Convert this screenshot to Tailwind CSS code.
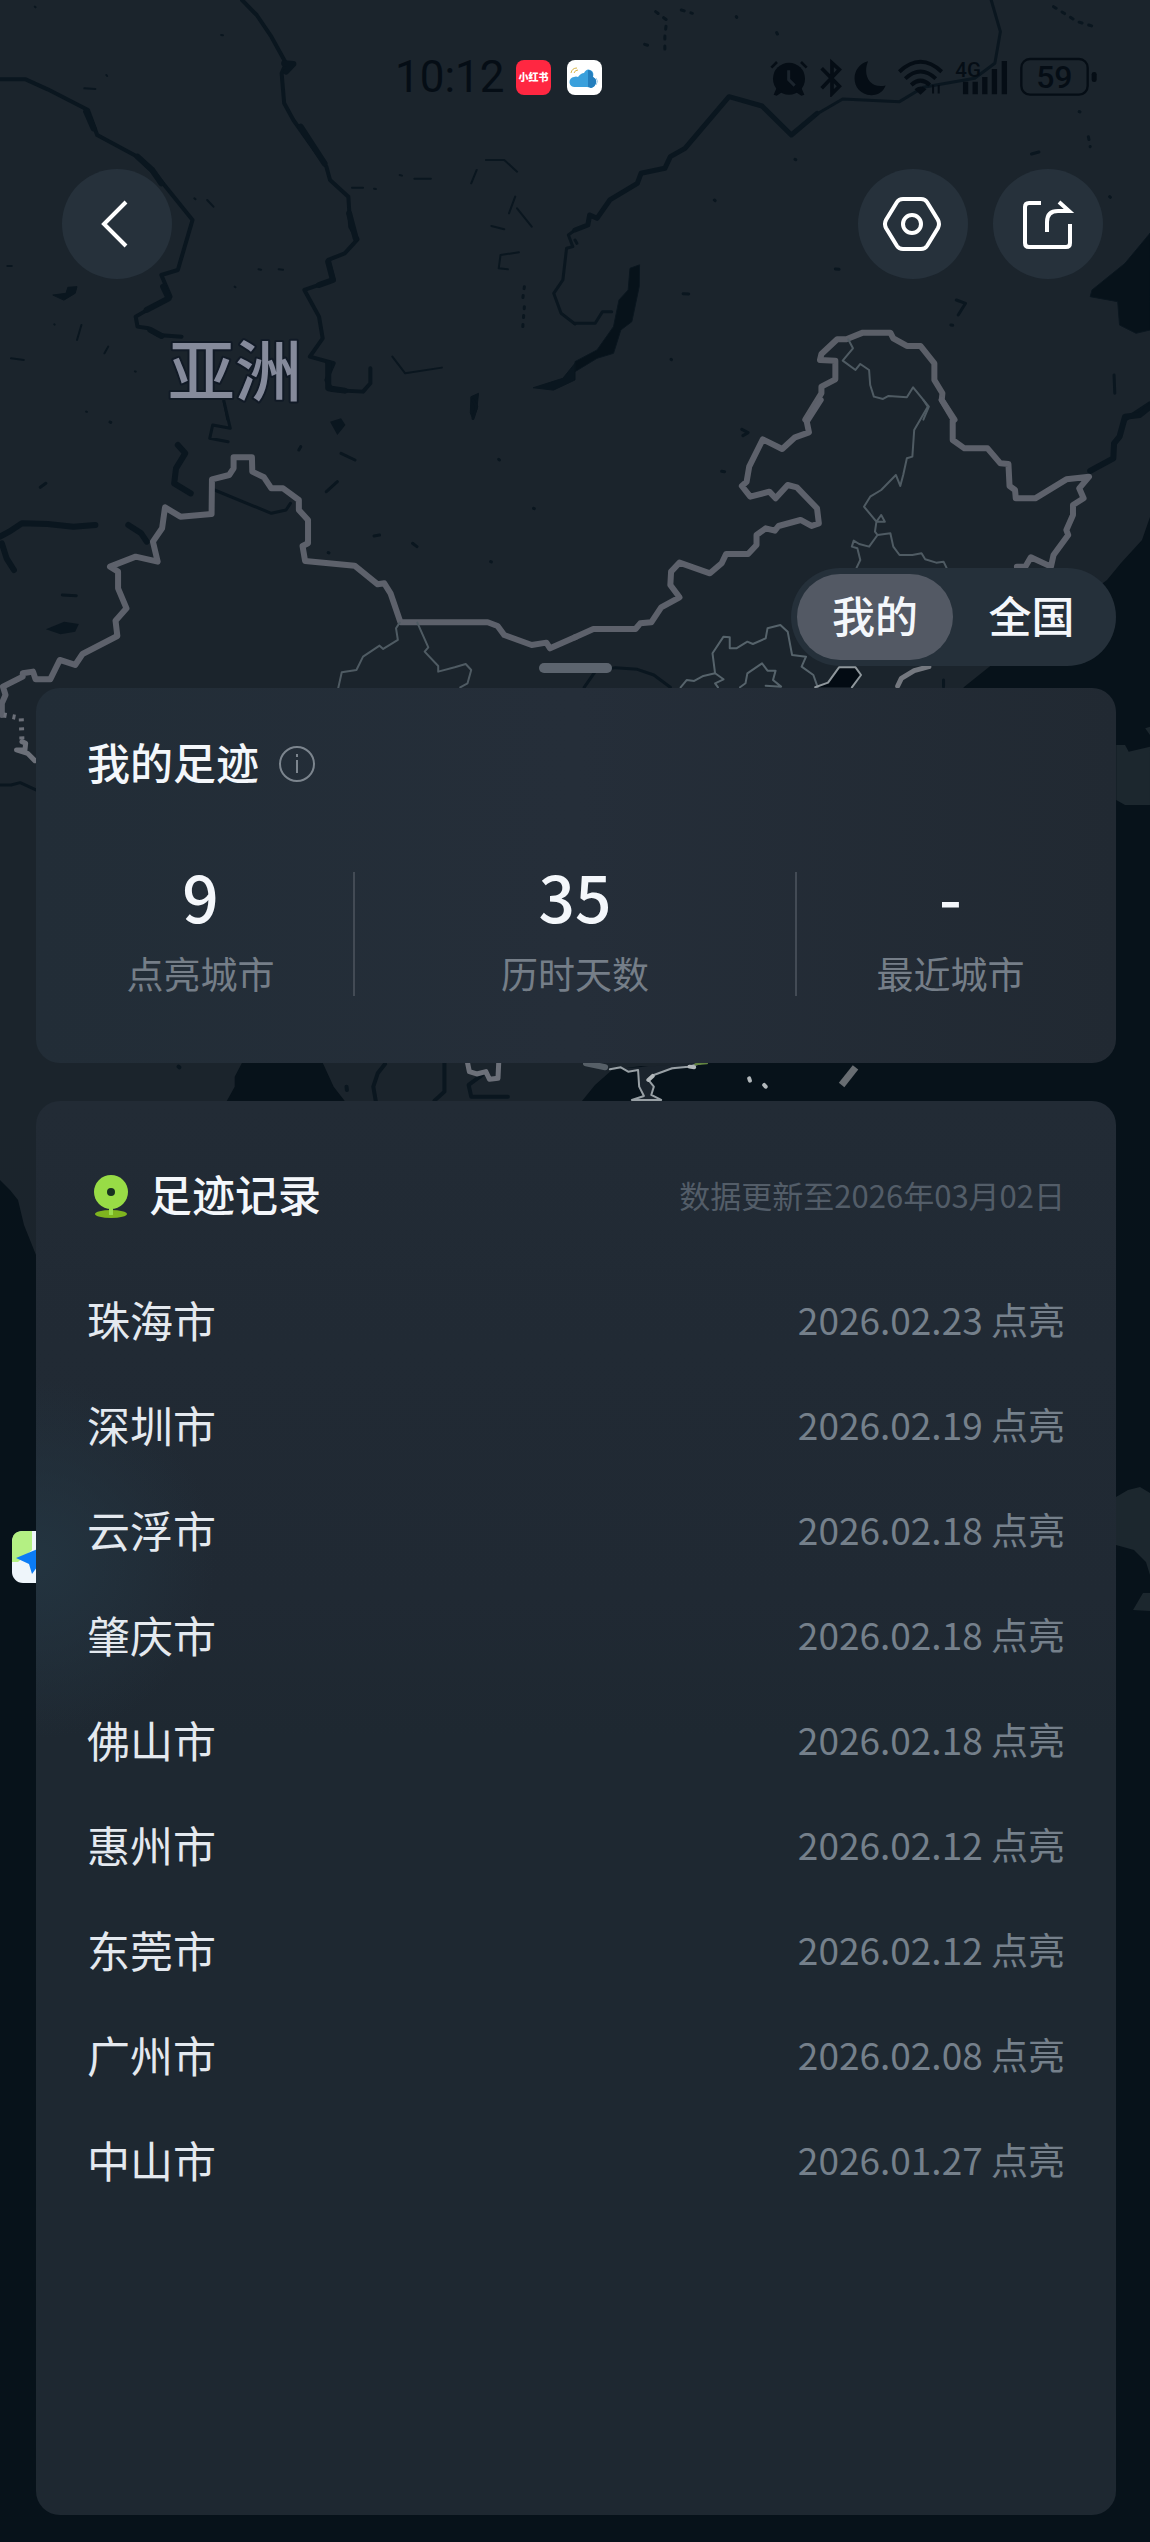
<!DOCTYPE html>
<html lang="zh-CN">
<head>
<meta charset="utf-8">
<meta name="viewport" content="width=device-width, initial-scale=1">
<title>我的足迹</title>
<script src="https://cdn.jsdelivr.net/npm/@tailwindcss/browser@4"></script>
</head>
<body class="bg-[#07121a] font-['Noto_Sans_CJK_SC',sans-serif] text-[#f4f7fb]">
<main class="relative isolate flex min-h-screen flex-col overflow-hidden pb-[27px]">

  <!-- Map -->
  <svg class="absolute inset-0 -z-10 h-full w-full [&_path]:[vector-effect:non-scaling-stroke]" viewBox="0 0 1150 2542" preserveAspectRatio="xMidYMin slice" fill="none" stroke-linecap="round" stroke-linejoin="round" aria-hidden="true">
    <rect width="1150" height="2542" fill="#1b242c"/>
    <path fill="#07121a" d="M1150 517 1142 540 1121 563 1107 580 989 667 964 687 703 1063 672 1070 641 1066 612 1070 595 1085 582 1101 582 1300 36 1255 24 1225 18 1200 10 1190 0 1180V2542H1150Z"/>
    <!-- north-west rivers and lakes -->
    <g transform="scale(.3667 .3333)" stroke="#0a161f">
      <path stroke-width="4" d="M0 238 70 238 130 268 240 330 265 405 375 470 430 530 525 660 485 810 440 825 465 890 370 950 375 980 405 985 430 1005 495 1010"/>
      <path stroke-width="6" d="M235 335 255 385M375 470 415 510 440 550M445 860 460 895 400 930M410 990 440 1008"/>
      <path stroke-width="4" d="M660 0 700 45 740 110 780 190 768 220 775 310 800 360 890 500 900 540 950 590 955 680 975 718 940 760 895 780 910 840 830 870 870 950 880 1015 845 1070 910 1090 890 1140 905 1170 990 1175 1010 1150 1010 1105"/>
      <path stroke-width="6" d="M775 190 800 192 780 215M820 380 885 490M952 640 970 715M895 785 908 840 870 855M895 1090 895 1165 940 1172"/>
      <path stroke-width="2" d="M1325 480 1375 480 1410 515M1285 550 1300 510M1070 1070 1105 1120 1205 1103M1405 590 1388 640M1410 625 1450 680M1340 678 1375 688M1415 757 1365 765 1360 805 1385 808M960 563 990 563M1020 566 1025 567"/>
      <path stroke-width="3" stroke-dasharray="2 7" d="M1430 860 1425 900M1430 920 1425 990"/>
      <path stroke-width="3" d="M1568 690 1550 705 1562 740 1545 745 1535 840 1510 880 1530 940 1568 972"/>
      <path fill="#0a161f" d="M1455 1163 1535 1135 1568 1090V1140L1510 1170ZM1285 1190 1305 1180 1300 1230 1290 1259 1283 1240ZM145 885 180 880 185 862 210 860 205 880 175 900Z"/>
      <path stroke-width="2" d="M210 1020 222 975M285 1060 295 1040M30 1075 65 1080M20 798 32 798M230 265 260 267M1090 525 1096 527M1130 536 1175 536M530 595 533 598M565 600 582 620M610 1205 620 1259M95 20 97 22M603 105 608 106M290 225 292 228M148 973 149 974M368 1114 370 1115M640 860 642 862M705 808 712 809M760 808 772 809M235 1235 237 1236"/>
    </g>
    <!-- north-east rivers, Baikal -->
    <g transform="translate(575) scale(.3667 .3333)" stroke="#0a161f">
      <path stroke-width="5" d="M0 690 35 675 40 645 60 655 95 600 170 550 180 520 245 505 260 470 300 445 420 290 510 318 590 405 660 340"/>
      <path stroke-width="3" d="M655 345 730 297 885 305 950 262 1090 235 1145 190 1160 95 1135 0"/>
      <path fill="#07121a" d="M175 795 150 805 145 870 120 900 105 980 60 1050 0 1085V1115L60 1075 105 1060 125 990 155 965 175 860Z"/>
      <path stroke-width="3" d="M0 970 55 970 75 935 100 935M0 720 5 730"/>
      <path fill="#07121a" d="M1568 700 1500 790 1410 870 1405 890 1480 905 1485 975 1530 1000 1568 990Z"/>
      <path stroke-width="3" stroke-dasharray="3 7" d="M220 35 250 60 245 110 245 150M190 133 215 142M290 30 320 40M1305 20 1370 65 1410 78M1400 410 1405 440"/>
      <path stroke-width="3" d="M440 50 441 52M1245 462 1265 456M1040 900 1065 910 1045 945M1470 1125 1472 1180M295 881 310 882M710 807 720 808M380 600 382 602M550 98 552 102M600 478 602 479M1458 590 1460 592M1375 335 1377 336M262 1078 263 1079M1025 975 1030 976"/>
      <path stroke-width="4" d="M1500 1259 1568 1210"/>
      <path stroke="#5b5f68" stroke-width="6" d="M628 1259 672 1180 672 1160 710 1138 710 1082 668 1080 672 1062 715 1018 740 1018 785 998 860 998 868 1015 905 1038 942 1038 980 1090 980 1140 1002 1180 1000 1200 1035 1259"/>
      <path stroke="#4f5b63" stroke-width="2" d="M745 1018 758 1045 730 1082 765 1110 778 1092 802 1110 805 1155 815 1190 840 1197 855 1188 905 1192 922 1162 965 1220 950 1259"/>
    </g>
    <!-- western border -->
    <g transform="translate(0 400) scale(.3667 .3333)">
      <path stroke="#0a161f" stroke-width="6" d="M0 410 25 395 60 370 130 372 200 380 260 375M5 430 18 475 38 510M350 375 385 400 400 425M485 135 505 160 480 205 475 250 520 280"/>
      <path stroke="#0a161f" stroke-width="3" d="M585 270 740 340 780 330 792 310M610 0 628 85 580 75 572 115 622 125M1290 0 1300 20 1290 55M0 1155 30 1155 55 1148 98 1170M815 150 820 140M930 160 968 180M890 275 920 245M1020 408 1035 405M1125 430 1137 440M110 262 125 250M170 585 208 587M300 66 302 67M1360 178 1362 180M1338 485 1340 486M895 458 897 459M1455 325 1457 326"/>
      <path fill="#0a161f" d="M125 688 175 665 215 672 205 695 165 703ZM900 65 930 55 942 75 920 105Z"/>
      <path stroke="#5d616b" stroke-width="6" d="M5 945 5 910 15 885 8 860 62 830 62 820 90 815 97 838 137 838 163 780 205 795 225 762 320 708 315 662 345 625 322 565 322 515 300 500 370 470 430 485 417 425 442 385 450 322 492 350 577 342 578 238 625 225 637 205 637 172 687 172 688 215 720 232 740 265 772 265 815 300 815 330 840 360 840 430 825 438 832 483 967 497 1030 553 1048 550 1065 580 1092 667 1330 667 1357 678 1375 705 1450 735 1490 728 1500 745 1568 712"/>
      <path stroke="#6c7079" stroke-width="5" stroke-dasharray="3 6" stroke-linecap="butt" d="M10 945 58 955 60 1030"/>
      <path stroke="#6c7079" stroke-width="5" d="M60 1025 70 1030 68 1050 45 1050 75 1060 95 1082"/>
      <path stroke="#4f5b63" stroke-width="2" d="M1090 668 1080 685 1085 720 1045 747 1035 737 990 770 972 810 932 817 922 866M1138 668 1168 742 1158 755 1195 798 1195 815 1240 802 1270 792 1285 810 1275 850 1255 862"/>
    </g>
    <!-- eastern border and provinces -->
    <g transform="translate(575 400) scale(.3667 .3333)">
      <path stroke="#0a161f" stroke-width="6" d="M1568 20 1540 45 1500 50 1485 110 1470 130 1468 175 1405 213"/>
      <path stroke="#0a161f" stroke-width="3" d="M25 862 55 815 110 803 170 808 215 825 260 862M400 214 408 215M455 88 472 98 458 107M1005 840 1005 860"/>
      <path stroke="#5d616b" stroke-width="6" d="M0 712 50 687 165 687 178 670 208 667 235 622 285 592 260 555 262 515 285 488 368 520 400 490 412 462 472 462 495 435 495 405 520 385 545 392 555 378 615 360 645 378 665 370 660 325 605 262 580 255 547 295 530 275 478 290 455 258 468 245 475 200 512 118 565 147 600 112 638 97 632 65 670 0M1000 0 1030 55 1030 120 1062 145 1125 145 1160 190 1182 192 1185 258 1200 270 1202 295 1255 295 1340 238 1402 230 1375 265 1387 295 1358 315 1358 345 1340 390 1345 405 1305 465 1298 500 1243 472 1228 500 1205 500"/>
      <path stroke="#4f5b63" stroke-width="2" d="M950 0 962 20 925 90 920 170 905 175 895 225 887 258 875 225 835 270 805 290 788 320 822 365 845 365 835 345 822 365 818 395 825 405 802 440 775 432 760 422 755 440 770 445 778 480 768 503M825 405 860 400 868 440 885 465 920 465 945 460 955 478 985 488 1005 485 1013 503"/>
      <path stroke="#56636b" stroke-width="2" d="M288 862 305 840 325 843 350 828 382 820 375 760 405 710 422 712 422 745 440 745 470 725 485 732 520 715 525 685 560 675 580 695 592 765 630 770 618 800 650 825 662 862M382 820 405 838 382 850 390 862M450 862 465 850 470 820 510 790 525 812 547 812 540 840 562 860 520 857"/>
      <path fill="#030b13" stroke="#8f979c" stroke-width="2" d="M655 862 690 848 720 802 765 802 780 825 755 862"/>
      <path stroke="#74787f" stroke-width="5" d="M880 858 890 835 925 812 965 800"/>
      <path fill="#1c272e" d="M1476 1035 1500 1035 1510 1055 1568 1040V1215L1500 1215 1476 1200ZM1555 985 1568 980V1005Z"/>
    </g>
    <!-- strip between the cards -->
    <g transform="translate(0 820) scale(.3667 .3333)">
      <path fill="#07121a" d="M660 728 640 770 640 800 615 850H945L910 800 880 728Z"/>
      <path stroke="#0a161f" stroke-width="4" d="M1050 732 1030 760 1018 800 1025 845M1212 728 1212 815 1185 842M1315 765 1278 795 1285 830 1385 830M945 800 946 810M487 740 489 742"/>
      <path stroke="#6c7079" stroke-width="5" d="M1275 728 1280 755 1300 762 1325 755 1335 778 1358 775 1360 728"/>
    </g>
    <g transform="translate(575 820) scale(.3667 .3333)">
      <path stroke="#565f67" stroke-width="6" d="M30 730 82 742"/>
      <path fill="#1b242d" stroke="#98a0a5" stroke-width="2" d="M95 748 125 742 145 755 172 750 175 800 188 828 155 840 235 840 208 825 215 800 200 780 215 765 265 745 310 740 350 728"/>
      <path stroke="#b2b8bb" stroke-width="4" d="M200 780 212 768M312 740 325 742M475 775 477 782M516 795 520 800"/>
      <path stroke="#62843f" stroke-width="2" d="M328 733 360 730"/>
      <path stroke="#686d72" stroke-width="7" stroke-linecap="butt" d="M727 795 765 742"/>
    </g>
    <path fill="#1c272e" d="M1116 1497 1128 1490 1140 1487 1150 1493V1575L1146 1562 1134 1550 1116 1545ZM1133 1610 1143 1593 1150 1593V1611Z"/>
    <!-- place marker -->
    <rect x="12" y="1531" width="52" height="52" rx="11" fill="#eef5fa"/>
    <path fill="#b4f083" d="M12 1562V1542Q12 1531 23 1531H32V1550L18 1562Z"/>
    <path fill="#0b7cf5" d="M16 1558 40 1548V1563L32 1574 29 1564Z"/>
    <text x="168" y="396" font-size="67" font-weight="500" fill="#858a9b" stroke="#111a26" stroke-width="4" paint-order="stroke">亚洲</text>
  </svg>

  <!-- Status bar -->
  <div class="flex h-[106px] items-center justify-between pt-12 pr-[52px] pl-[395px] text-[#050d15]">
    <div class="flex items-center gap-4">
      <time class="w-[105px] font-['Roboto',sans-serif] text-[44px] leading-none whitespace-nowrap">10:12</time>
      <span class="flex size-[35px] items-center justify-center rounded-lg bg-[#ff2741] text-[10px] leading-none font-black text-white">小红书</span>
      <svg class="size-[35px]" viewBox="0 0 35 35" aria-label="天气"><rect width="35" height="35" rx="8" fill="#fff"/><path d="M4 13Q5 8 10 8M7 13Q8 10 11 10" fill="none" stroke="#d8b64b"/><path fill="#3aa0dc" d="M8 27a5 5 0 0 1-1-10q2-1 4 0q3-4 6-4 3-6 8-2 2 2 1 6 4 2 3 6-1 4-5 5-2-1-4-1Z"/><path fill="#247ebd" d="M21 10q5 0 5 7 4 2 3 6-1 4-5 5-2-1-3-1Z"/><path d="M29 18q3 3 0 7" fill="none" stroke="#9bcbea"/></svg>
    </div>
    <div class="flex items-center gap-3 pb-0.5">
      <svg class="h-[41px] w-[38px]" viewBox="62 45 114 123" fill="currentColor" aria-label="闹钟"><circle cx="119" cy="113" r="48"/><path d="m82 140 18 12-18 12-9-3ZM156 140l-18 12 18 12 9-3Z"/><path d="M66 80 83 63M172 80 155 63" fill="none" stroke="currentColor" stroke-width="8"/><path d="M118 88V116L136 134" fill="none" stroke="#1b242d" stroke-width="9"/></svg>
      <svg class="h-[41px] w-[22px]" viewBox="212 45 66 123" fill="none" stroke="currentColor" stroke-width="11" aria-label="蓝牙"><path d="M217 82 270 136 248 158V66L270 86 217 142"/></svg>
      <svg class="h-[41px] w-[32px]" viewBox="315 45 98 123" fill="currentColor" aria-label="勿扰"><path d="M358 60C300 75 303 160 368 164 390 164 405 152 412 134 365 145 340 105 358 60Z"/></svg>
      <svg class="h-[41px] w-[45px]" viewBox="450 45 136 123" fill="none" stroke="currentColor" stroke-width="12" aria-label="无线网络"><path d="M454 92Q518 32 582 92M472 113Q518 70 564 113M490 132Q518 106 546 132"/><path d="M518 162 500 145Q518 128 536 145Z" fill="currentColor" stroke="none"/><path d="M556 132V158M573 132V158" stroke-width="6"/></svg>
      <svg class="h-[41px] w-[53px]" viewBox="622 45 160 123" aria-label="4G 信号"><text x="623" y="108" font-size="62" font-family="Roboto, sans-serif" font-weight="500" fill="currentColor">4G</text><path d="M654 122V160M683 122V160M712 108V160M741 84V160M771 60V160" fill="none" stroke="currentColor" stroke-width="16"/></svg>
      <svg class="h-[41px] w-[78px]" viewBox="815 45 234 123" aria-label="电量 59"><rect x="819" y="54" width="199" height="107" rx="26" fill="none" stroke="currentColor" stroke-width="7"/><rect x="1030" y="93" width="15" height="30" rx="7" fill="currentColor"/><text x="918" y="142" font-size="96" text-anchor="middle" font-family="Roboto, sans-serif" font-weight="500" fill="currentColor">59</text></svg>
    </div>
  </div>

  <!-- Navigation -->
  <header class="mt-[63px] flex items-center justify-between pr-[47px] pl-[62px]">
    <button type="button" aria-label="返回" class="flex size-[110px] items-center justify-center rounded-full bg-[#26313b]">
      <svg class="size-[60px]" viewBox="0 0 60 60" fill="none" stroke="#fff" stroke-width="4"><path d="M39 8 17 30 39 52"/></svg>
    </button>
    <div class="flex gap-[25px]">
      <button type="button" aria-label="设置" class="flex size-[110px] items-center justify-center rounded-full bg-[#26313b]">
        <svg class="size-[60px]" viewBox="0 0 60 60" fill="none" stroke="#fff" stroke-width="4"><path d="M20 5H38Q42 5 44 8L55 26Q57 30 55 34L44 52Q42 55 38 55H20Q16 55 14 52L3 34Q1 30 3 26L14 8Q16 5 20 5Z"/><circle cx="29" cy="30" r="9"/></svg>
      </button>
      <button type="button" aria-label="分享" class="flex size-[110px] items-center justify-center rounded-full bg-[#26313b]">
        <svg class="size-[60px]" viewBox="0 0 60 60" fill="none" stroke="#fff" stroke-width="4"><path d="M23 9H11Q7 9 7 13V49Q7 53 11 53H48Q52 53 52 49V30"/><path d="M29 38V28Q29 17 40 17H51L41 8"/></svg>
      </button>
    </div>
  </header>

  <!-- Scope switch -->
  <div class="mt-[289px] mr-[34px] flex h-[98px] items-center self-end rounded-full bg-[#25303a] p-[6px] text-[43px] font-medium">
    <button type="button" aria-pressed="true" class="flex h-full w-[156px] items-center justify-center rounded-full bg-[#535964] pb-[6px] leading-none">我的</button>
    <button type="button" aria-pressed="false" class="flex h-full w-[157px] items-center justify-center rounded-full pb-[6px] leading-none">全国</button>
  </div>
  <div class="-mt-[3px] h-[10px] w-[73px] self-center rounded-full bg-[#5c646e]"></div>

  <!-- Summary -->
  <section class="mt-[15px] mr-[34px] ml-9 rounded-3xl bg-linear-to-r from-[#222d37] via-[#252e39] to-[#212932] pt-[43px] pb-[67px]">
    <div class="flex items-center gap-5 px-[51px]">
      <h1 class="text-[43px] leading-[60px] font-medium">我的足迹</h1>
      <button type="button" aria-label="说明" class="pt-1.5"><svg class="size-[36px]" viewBox="0 0 36 36" fill="none" stroke="#7c858e" stroke-width="2"><circle cx="18" cy="18" r="17"/><path d="M18 14V27M18 8V11"/></svg></button>
    </div>
    <dl class="mt-[81px] grid grid-cols-[307fr_442fr_307fr] px-3 text-center">
      <div class="flex h-[124px] flex-col-reverse justify-between border-r-2 border-[#434b55]">
        <dt class="text-[37px] leading-[46px] text-[#757e88]">点亮城市</dt>
        <dd class="text-[64px] leading-[46px] font-medium">9</dd>
      </div>
      <div class="flex h-[124px] flex-col-reverse justify-between border-r-2 border-[#434b55]">
        <dt class="text-[37px] leading-[46px] text-[#757e88]">历时天数</dt>
        <dd class="text-[64px] leading-[46px] font-medium">35</dd>
      </div>
      <div class="flex h-[124px] flex-col-reverse justify-between">
        <dt class="text-[37px] leading-[46px] text-[#757e88]">最近城市</dt>
        <dd class="text-[64px] leading-[46px] font-medium">-</dd>
      </div>
    </dl>
  </section>

  <!-- Records -->
  <section class="mt-[38px] mr-[34px] ml-9 flex-1 rounded-3xl bg-[radial-gradient(circle_at_0_458px,#233440,#20293300_180px),linear-gradient(#222b35,#202933_35%,#1e2831_45%)] px-[51px] pt-[60px]">
    <div class="flex items-center justify-between">
      <div class="flex items-center gap-5">
        <svg class="mt-1.5 ml-1.5 h-[44px] w-[36px]" viewBox="0 0 36 44" aria-hidden="true"><ellipse cx="18" cy="40" rx="16" ry="4" fill="#7fb51f"/><path d="M18 32V41" stroke="#9add4c" stroke-width="4"/><circle cx="18" cy="18" r="17" fill="#98dc46"/><circle cx="18" cy="18" r="4" fill="#17301f"/></svg>
        <h2 class="text-[43px] leading-[60px] font-medium">足迹记录</h2>
      </div>
      <p class="pt-1 text-[31px] leading-[60px] text-[#535d68]">数据更新至2026年03月02日</p>
    </div>
    <ul class="mt-[42px] [&>li]:flex [&>li]:h-[105px] [&>li]:items-center [&>li]:justify-between [&_span]:text-[43px] [&_span]:text-[#e4e9ef] [&_time]:text-[37px] [&_time]:text-[#75808b]">
      <li><span>珠海市</span><time>2026.02.23 点亮</time></li>
      <li><span>深圳市</span><time>2026.02.19 点亮</time></li>
      <li><span>云浮市</span><time>2026.02.18 点亮</time></li>
      <li><span>肇庆市</span><time>2026.02.18 点亮</time></li>
      <li><span>佛山市</span><time>2026.02.18 点亮</time></li>
      <li><span>惠州市</span><time>2026.02.12 点亮</time></li>
      <li><span>东莞市</span><time>2026.02.12 点亮</time></li>
      <li><span>广州市</span><time>2026.02.08 点亮</time></li>
      <li><span>中山市</span><time>2026.01.27 点亮</time></li>
    </ul>
  </section>
</main>
</body>
</html>
